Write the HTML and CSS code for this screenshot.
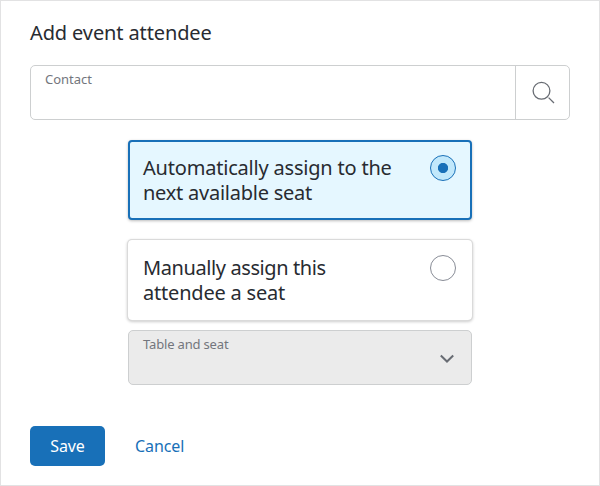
FILE: index.html
```html
<!DOCTYPE html>
<html lang="en">
<head>
<meta charset="utf-8">
<title>Add event attendee</title>
<link rel="stylesheet" href="styles.css">
</head>
<body>
<form class="modal">
  <h1 class="title">Add event attendee</h1>
  <div class="lookup">
    <div class="label">Contact</div>
    <div class="search"><svg width="24" height="24" viewBox="0 0 24 24"><circle cx="10.5" cy="9.8" r="8.4"/><path d="M17.6 16.6L23 22"/></svg></div>
  </div>
  <div class="choices">
    <div class="card selected"><div class="text"><span class="t-a1">Automatically assign to the</span><br><span class="t-a2">next available seat</span></div><span class="radio"></span></div>
    <div class="card"><div class="text"><span class="t-m1">Manually assign this</span><br><span class="t-m2">attendee a seat</span></div><span class="radio"></span></div>
    <div class="select"><span class="t-table">Table and seat</span><svg width="16" height="10" viewBox="0 0 16 10"><path d="M1.8 1.5l6.2 6 6.2-6"/></svg></div>
  </div>
  <div class="actions"><div class="save">Save</div><div class="cancel">Cancel</div></div>
</form>
</body>
</html>
```
FILE: styles.css
```css
* { box-sizing: border-box; }
body { margin: 0; font-family: "Noto Sans", sans-serif; color: #282b31; background: #fff; }
.modal { width: 600px; height: 486px; border: 1px solid #e2e2e3; padding: 19px 29px; }
.title { margin: 0; font-size: 20px; font-weight: 400; line-height: 26px; letter-spacing: -0.12px; }
.lookup { display: flex; height: 55px; margin-top: 19px; border: 1px solid #cdcfd0; border-radius: 5px; }
.label { flex: 1; padding: 5px 14px; font-size: 13px; line-height: 17px; color: #73767d; }
.search { width: 54px; border-left: 1px solid #cdcfd0; display: grid; place-items: center; }
svg { fill: none; stroke: #686c73; stroke-width: 1.3; }
.choices { width: 344px; margin: 20px auto 0; }
.card { display: flex; justify-content: space-between; height: 80px; padding: 15px 16px 15px 15px; border-radius: 4px; margin-bottom: 20px; box-shadow: 0 0 0 1px #dadada, 0 1px 3px 1px #0003; }
.selected { background: #e5f7ff; border: 2px solid #1870b8; padding: 13px 14px 13px 13px; box-shadow: 0 1px 3px #0004; }
.text { font-size: 20px; line-height: 25px; white-space: nowrap; }
.t-a1 { letter-spacing: -0.2px; }
.t-a2 { letter-spacing: -0.24px; }
.t-m1 { letter-spacing: -0.4px; }
.t-m2 { letter-spacing: -0.2px; }
.radio { width: 26px; height: 26px; border: 1px solid #888c96; border-radius: 50%; }
.selected .radio { border-color: #1870b8; background: radial-gradient(#1870b8 4.7px, #c1e8fb 5.5px); }
.select { display: flex; justify-content: space-between; height: 55px; margin-top: -10px; background: #ebebeb; border: 1px solid #cdcfd0; border-radius: 5px; padding: 5px 16px 0 14px; font-size: 13px; line-height: 17px; color: #73767d; }
.t-table { letter-spacing: -0.17px; }
.select svg { margin-top: 18px; stroke-width: 2; }
.actions { display: flex; margin-top: 41px; font-size: 16px; line-height: 40px; letter-spacing: -0.1px; }
.save { width: 75px; height: 40px; border-radius: 5px; background: #1870b8; color: #fff; text-align: center; }
.cancel { margin-left: 30px; color: #1870b8; }
```
